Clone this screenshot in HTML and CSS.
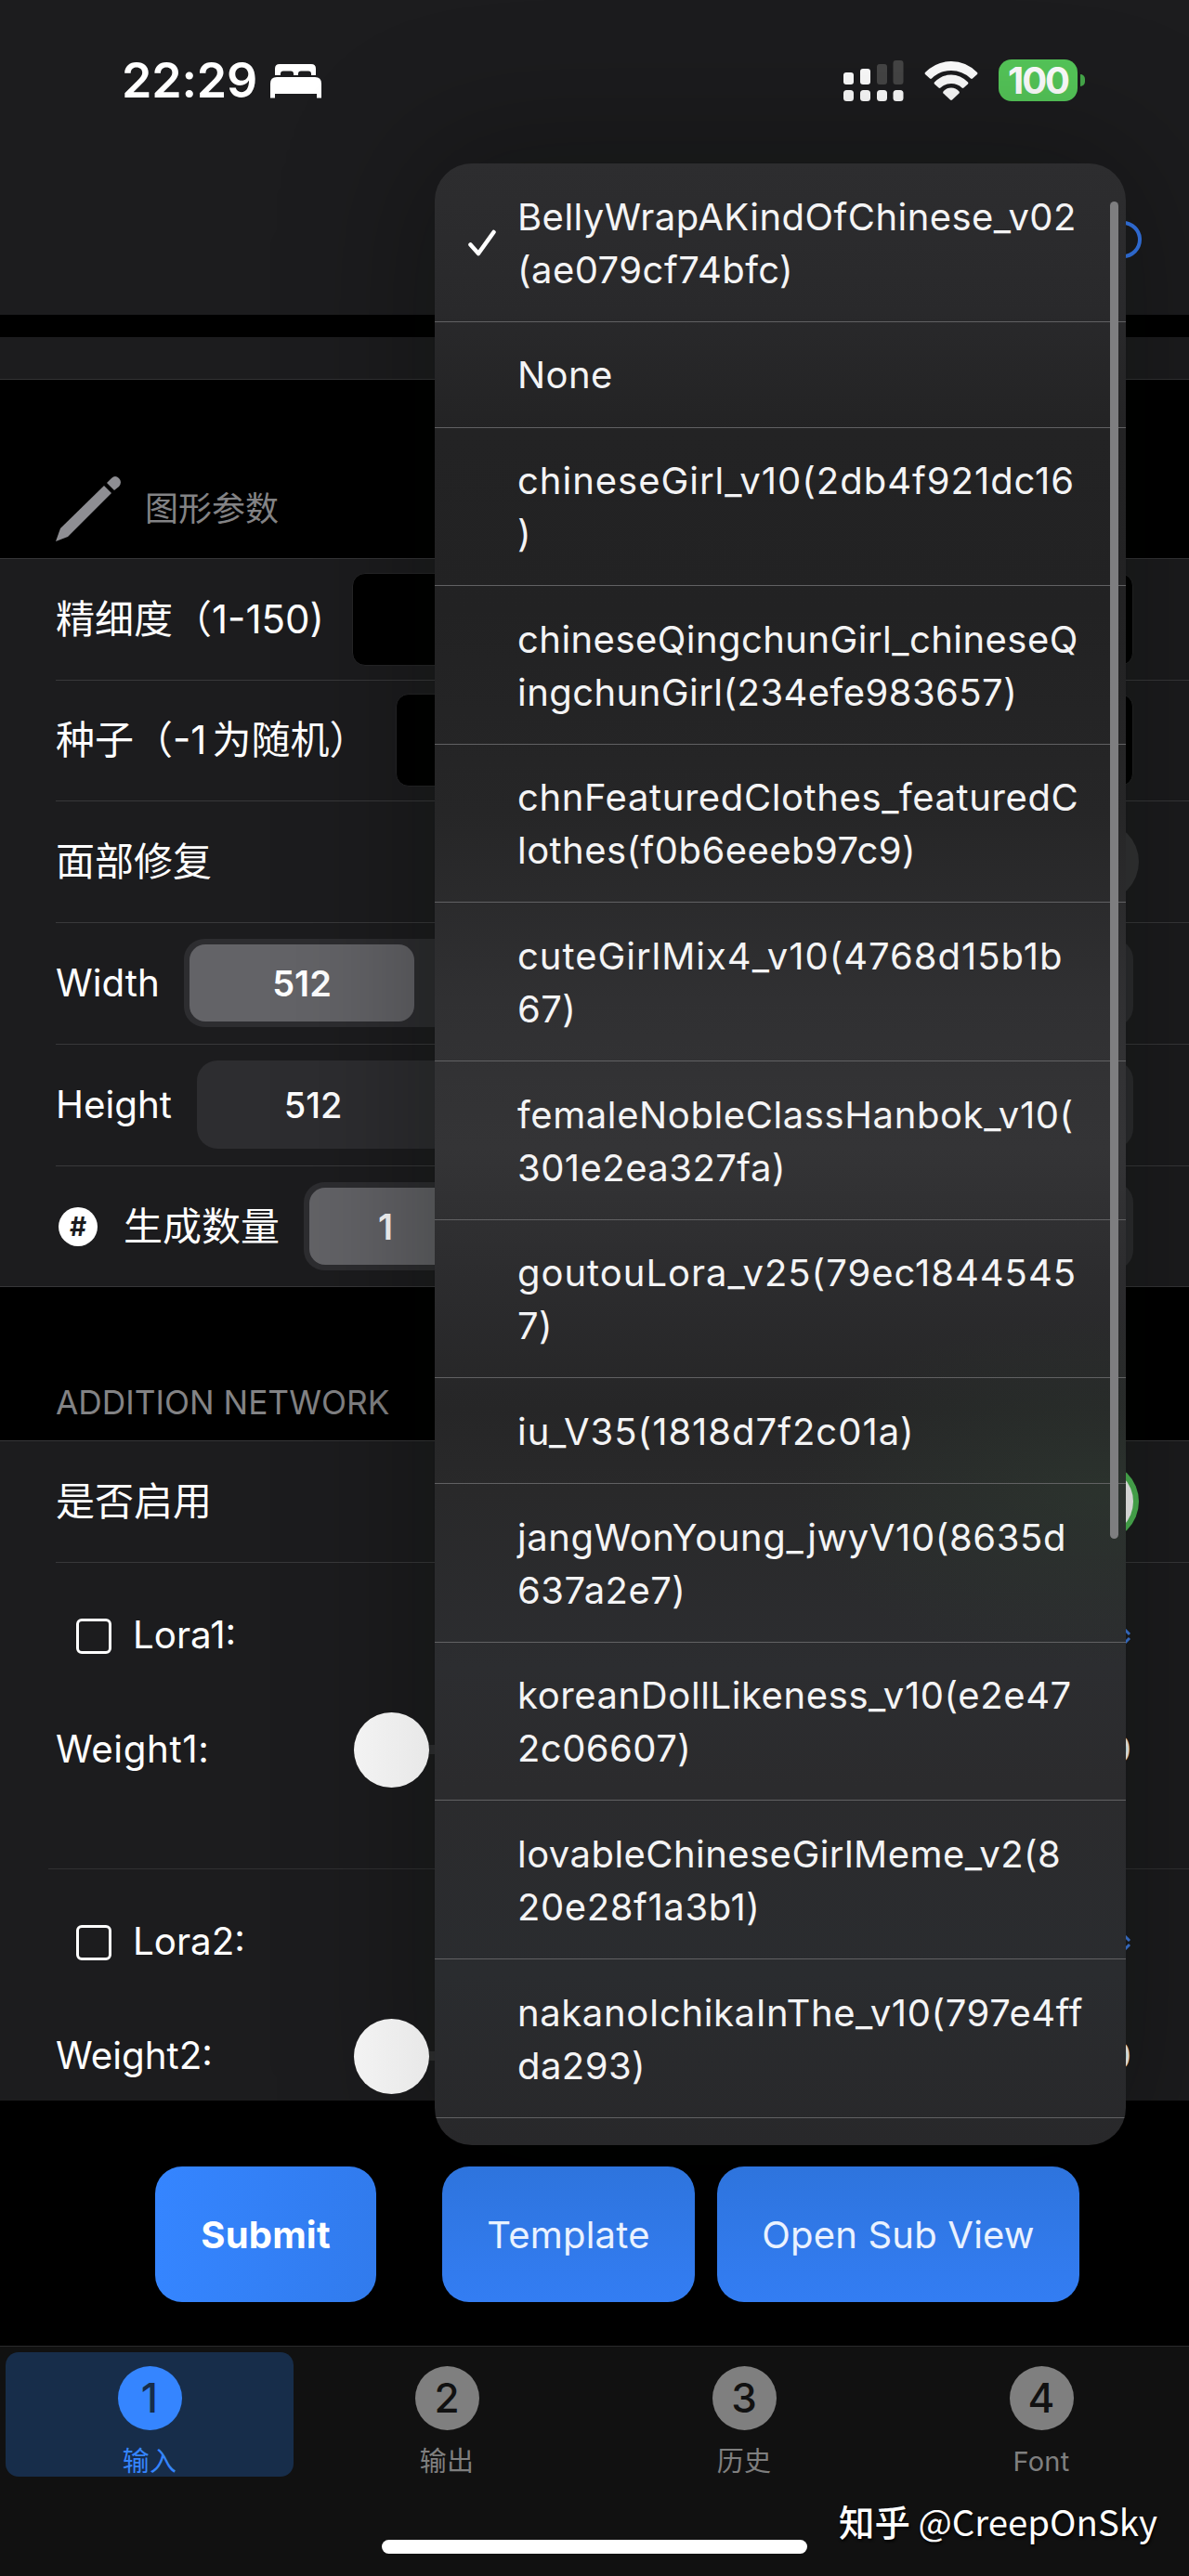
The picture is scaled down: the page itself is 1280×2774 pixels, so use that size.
FILE: index.html
```html
<!DOCTYPE html>
<html lang="zh-CN">
<head>
<meta charset="utf-8">
<title>Lora</title>
<link rel="stylesheet" href="styles.css">
</head>
<body>
<div class="screen">
  <header class="top">
    <div class="status">
      <span class="clock">22:29</span>
      <svg class="bed" width="55" height="38" viewBox="0 0 55 38" fill="#fff"><path d="M5 13V6q0-5 5-5h34q5 0 5 5v7h-5v-1.500q0-3-3-3h-8q-3 0-3 3V13h-5v-1.500q0-3-3-3h-8q-3 0-3 3V13z"/><path d="M0 37.500V22q0-7 7-7h41q7 0 7 7v15.500h-5V33H5v4.500z"/></svg>
      <svg class="signal" width="66" height="46" viewBox="0 0 66 46" fill="#fff"><rect x="0" y="14" width="11" height="13" rx="3"/><rect x="18" y="10" width="11" height="17" rx="3"/><rect x="36" y="5" width="11" height="22" rx="3" fill="#464646"/><rect x="53.500" y="1" width="11" height="26" rx="3" fill="#464646"/><rect x="0" y="33" width="11" height="12" rx="3.500"/><rect x="18" y="33" width="11" height="12" rx="3.500"/><rect x="36" y="33" width="11" height="12" rx="3.500"/><rect x="53.500" y="33" width="11" height="12" rx="3.500"/></svg>
      <svg class="wifi" width="58" height="43" viewBox="0 0 58 43" fill="#fff"><path d="M1 13Q13 1 29 1T57 13q.8 1 0 2L52 19.500q-1 .8-2 0Q41 11 29 11T8 19.500q-1 .8-2 0L1 15q-.8-1 0-2z"/><path d="M11 23.500Q19 15.500 29 15.500T47 23.500q.8 1 0 2L42.500 29.500q-1 .8-2 0Q36 25 29 25T17.500 29.500q-1 .8-2 0L11 25.500q-.8-1 0-2z"/><path d="M20.500 33.500Q24 29.500 29 29.500t8.500 4q.7 1 0 2l-7.500 7q-1 .8-2 0l-7.500-7q-.7-1 0-2z"/></svg>
      <span class="battery">100</span><i class="nub"></i>
    </div>
    <div class="info"><i class="ring"></i></div>
  </header>
  <div class="strip"></div>
  <div class="section-title first">
    <svg width="70" height="70" viewBox="0 0 70 70" fill="#8e8e93"><path d="M0 70 5 56 52 10 60 18 13 65z"/><path d="M55 7 60 2q4-4 8 0t0 9L63 15z"/></svg>
    <span>图形参数</span>
  </div>
  <section class="group">
    <div class="row"><label class="cjk">精细度（1-150)</label><div class="field f1"></div></div>
    <div class="row"><label class="cjk">种子（<span class="gap">-1</span>为随机）</label><div class="field f2"></div></div>
    <div class="row"><label class="cjk">面部修复</label><div class="switch"></div></div>
    <div class="row"><label>Width</label><div class="seg s1"><span class="thumb">512</span></div></div>
    <div class="row"><label>Height</label><div class="seg s2"><span class="plain">512</span></div></div>
    <div class="row"><i class="hash">#</i><label class="cjk">生成数量</label><div class="seg s3"><span class="thumb">1</span></div></div>
  </section>
  <div class="section-title second"><span>ADDITION NETWORK</span></div>
  <section class="group network">
    <div class="row"><label class="cjk">是否启用</label><div class="switch on"></div></div>
    <div class="lora">
      <div class="pick"><i class="box"></i><label>Lora1:</label><svg width="16" height="16" viewBox="0 0 16 16" fill="none" stroke="#3f7be0" stroke-width="3"><path d="M4 6 8 2l4 4M4 10l4 4 4-4"/></svg></div>
      <div class="weight"><label class="wide">Weight1:</label><div class="slider"></div><span class="value">0</span></div>
    </div>
    <div class="lora">
      <div class="pick"><i class="box"></i><label>Lora2:</label><svg width="16" height="16" viewBox="0 0 16 16" fill="none" stroke="#3f7be0" stroke-width="3"><path d="M4 6 8 2l4 4M4 10l4 4 4-4"/></svg></div>
      <div class="weight"><label>Weight2:</label><div class="slider"></div><span class="value">0</span></div>
    </div>
  </section>
  <div class="actions">
    <button class="b1">Submit</button><button class="b2">Template</button><button class="b3">Open Sub View</button>
  </div>
  <nav class="tabs">
    <div class="tab active"><i>1</i><span>输入</span></div>
    <div class="tab"><i>2</i><span>输出</span></div>
    <div class="tab"><i>3</i><span>历史</span></div>
    <div class="tab"><i>4</i><span>Font</span></div>
  </nav>

  <div class="menu">
    <ul>
      <li><svg class="check" width="30" height="29" viewBox="0 0 30 29" fill="none" stroke="#fff" stroke-width="4.500" stroke-linecap="round" stroke-linejoin="round"><path d="M2.500 16.500 11 26 27.500 3"/></svg>BellyWrapAKindOfChinese_v02<br>(ae079cf74bfc)</li>
      <li class="single">None</li>
      <li><span class="wider">chineseGirl_v10(2db4f921dc16</span><br>)</li>
      <li>chineseQingchunGirl_chineseQ<br>ingchunGirl(234efe983657)</li>
      <li><span class="wide">chnFeaturedClothes_featuredC</span><br>lothes(f0b6eeeb97c9)</li>
      <li><span class="wider">cuteGirlMix4_v10(4768d15b1b</span><br>67)</li>
      <li><span class="wide">femaleNobleClassHanbok_v10(</span><br>301e2ea327fa)</li>
      <li><span class="wider">goutouLora_v25(79ec1844545</span><br>7)</li>
      <li class="single"><span class="wider">iu_V35(1818d7f2c01a)</span></li>
      <li><span class="wide">jangWonYoung_jwyV10(8635d</span><br>637a2e7)</li>
      <li><span class="wide">koreanDollLikeness_v10(e2e47</span><br>2c06607)</li>
      <li>lovableChineseGirlMeme_v2(8<br><span class="wide">20e28f1a3b1)</span></li>
      <li><span class="wide">nakanoIchikaInThe_v10(797e4ff</span><br>da293)</li>
    </ul>
    <i class="scrollbar"></i>
  </div>
  <div class="watermark"><b>知乎</b> @CreepOnSky</div>
  <i class="home"></i>
</div>
</body>
</html>
```
FILE: styles.css
```css
* { box-sizing: border-box; }
body { margin: 0; background: #000; }
i { font-style: normal; display: block; flex: none; }
svg { flex: none; display: block; }
.screen {
  position: relative; width: 1280px; height: 2774px; overflow: hidden;
  display: flex; flex-direction: column; background: #000; color: #fff;
  font: 40px/1 Inter, "Noto Sans CJK SC", sans-serif;
}

.top { height: 339px; background: #1c1c1e; flex: none; }
.status { height: 175px; padding: 0 112px 2px 131px; display: flex; align-items: center; }
.clock { font-size: 52px; font-weight: 600; letter-spacing: -.2px; width: 160px; }
.signal { margin-left: auto; }
.wifi { margin-left: 21px; }
.battery {
  margin-left: 22px; width: 85px; height: 45px; border-radius: 14px; background: #55c759;
  font-size: 40px; font-weight: 700; line-height: 45px; text-align: center; letter-spacing: -2px;
}
.nub { width: 5px; height: 13px; margin-left: 3px; border-radius: 0 6px 6px 0; background: #46a94a; }
.info { display: flex; justify-content: flex-end; padding: 63px 51px 0 0; }
.ring { width: 40px; height: 40px; border: 4px solid #367af0; border-radius: 50%; }
.strip { height: 46px; margin-top: 24px; background: #1c1c1e; border-bottom: 1px solid #333335; flex: none; }

.section-title { display: flex; align-items: center; padding-left: 60px; color: #838385; flex: none; }
.first { height: 192px; padding-top: 86px; font-size: 36px; gap: 26px; }
.second { height: 165px; padding-top: 85px; font-size: 35.3px; }

.group { background: #1c1c1e; border-top: 1px solid #363638; border-bottom: 1px solid #363638; flex: none; padding-left: 60px; height: 785px; }
.row { height: 130.8px; display: flex; align-items: center; padding-right: 60px; }
.row:first-child { height: 129.5px; }
.row + .row { border-top: 1px solid #38383a; }
.group label { font-size: 40.3px; white-space: nowrap; flex: none; }
.group label.cjk { font-size: 42px; }
.wide { letter-spacing: .6px; }
.wider { letter-spacing: .98px; }
.gap { margin-right: 6px; }
.field { height: 100px; margin-left: auto; border: 1px solid #262628; border-radius: 14px; background: #000; }
.f1 { width: 841px; }
.f2 { width: 794px; }
.switch { margin: 0 -6px 0 auto; width: 138px; height: 86px; border-radius: 43px; background: #343436; }
.on { background: #50bb56; padding: 6px; }
.on::after { content: ""; display: block; margin-left: auto; width: 74px; height: 74px; border-radius: 50%; background: #fff; }
.seg {
  margin-left: auto; height: 95px; padding: 6px; border-radius: 22px; background: #2d2d30;
  font-size: 38px; line-height: 84px; text-align: center; font-weight: 500;
}
.thumb { display: block; height: 83px; width: 242px; border-radius: 17px; background: #636367; font-weight: 600; }
.plain { display: block; width: 238px; }
.s1 { width: 1022px; }
.s2 { width: 1008px; }
.s3 { width: 893px; }
.s3 .thumb { width: 164px; }
.hash { width: 42px; height: 42px; margin: 0 28px 0 3px; border-radius: 50%; background: #fff; color: #1c1c1e; font-size: 28px; font-weight: 700; line-height: 42px; text-align: center; }

.network { height: 711px; overflow: hidden; border-bottom: 0; }
.lora { height: 330px; padding: 60px 60px 0 0; border-top: 1px solid #38383a; }
.lora + .lora { margin-left: -8px; padding-left: 8px; border-color: #303032; }
.pick { height: 38px; padding: 0 0 0 22px; display: flex; align-items: center; }
.pick svg { margin: 0 0 0 auto; }
.box { width: 38px; height: 38px; border: 3.5px solid #fff; border-radius: 6px; margin-right: 23px; }
.weight { height: 81px; margin-top: 63px; display: flex; align-items: center; }
.slider { margin-left: auto; margin-right: 32px; width: 780px; height: 81px; background: linear-gradient(#303032, #303032) 0 50% / 100% 10px no-repeat; }
.slider::before { content: ""; position: relative; z-index: 1; display: block; width: 81px; height: 81px; border-radius: 50%; background: linear-gradient(90deg, #f3f3f3, #e8e8e8); }
.value { margin-right: 2px; }

.actions { display: flex; align-items: flex-start; padding: 71px 0 0 167px; height: 264px; flex: none; }
button { position: relative; z-index: 1; height: 146px; border: 0; padding: 0; border-radius: 29px; background: linear-gradient(#2e74dd, #337df3); color: #eaf2ff; font: 40px Inter, sans-serif; letter-spacing: .2px; }
.b1 { width: 238px; margin-right: 71px; font-weight: 700; color: #fff; background: linear-gradient(90deg, #3585ff, #317bed); }
.b2 { width: 272px; margin-right: 24px; }
.b3 { width: 390px; }

.tabs { display: flex; height: 248px; background: #111; border-top: 1px solid #2a2a2b; padding-top: 6px; flex: none; }
.tab { width: 310px; height: 134px; margin: 0 4px 0 6px; padding-top: 15px; display: flex; flex-direction: column; align-items: center; border-radius: 14px; color: #7f7f7f; }
.tab i { width: 69px; height: 69px; border-radius: 50%; background: #7f7f7f; color: #111; font-size: 44px; font-weight: 500; line-height: 69px; text-align: center; }
.tab span { margin-top: 16px; font-size: 29px; line-height: 36px; letter-spacing: .3px; }
.active { background: #172d4a; color: #3585ff; }
.tab.active i { background: #3585ff; color: #172d4a; }

.menu {
  position: absolute; left: 468px; top: 176px; width: 744px; height: 2134px; overflow: hidden; border-radius: 40px;
  background:
    radial-gradient(ellipse 330px 190px at 96% 1430px, rgba(46, 64, 50, .4), transparent),
    linear-gradient(#2d2d2f 0, #29292b 160px, #232324 290px, #222223 480px, #262627 700px, #303032 900px, #343436 1060px, #2c2c2e 1200px, #262627 1340px, #29292a 1430px, #2c2d30 1620px, #2b2b2d 1750px, #2a2c2f 1950px, #28282a 2134px);
  box-shadow: 0 0 150px 20px rgba(0, 5, 0, .3);
}
.menu ul { list-style: none; margin: 0; padding: 0; }
.menu li {
  position: relative; height: 170.6px; padding: 28.6px 0 0 89px; border-bottom: 1px solid #616163;
  font-size: 40px; line-height: 57px; letter-spacing: .45px; white-space: nowrap; color: #f4f4f5;
}
.menu .single { height: 114px; }
.check { position: absolute; left: 36px; top: 71px; }
.scrollbar { position: absolute; left: 727px; top: 41px; width: 9px; height: 1440px; border-radius: 5px; background: #7e7e80; }
.watermark { position: absolute; right: 34px; top: 2687px; font: 38.4px/54px "Noto Sans CJK SC", sans-serif; white-space: nowrap; text-shadow: 1px 2px 3px #000; }
.watermark b { font-weight: 500; }
.home { position: absolute; left: 411px; top: 2735px; width: 458px; height: 15px; border-radius: 8px; background: #fff; }
```
